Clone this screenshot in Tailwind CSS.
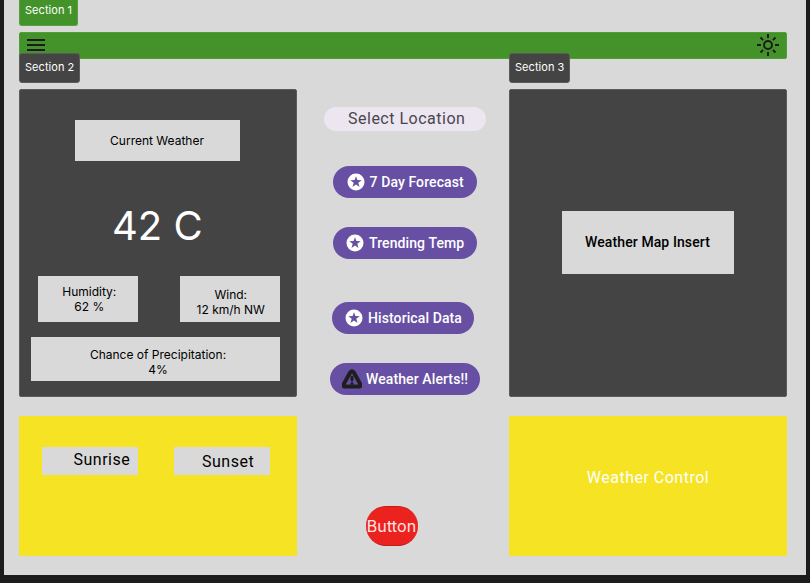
<!DOCTYPE html>
<html lang="en">
<head>
<meta charset="utf-8">
<title>Weather Dashboard</title>
<script src="https://cdn.jsdelivr.net/npm/@tailwindcss/browser@4"></script>
</head>
<body class="bg-[#1c1c1c] h-[583px] overflow-hidden px-1 font-['Inter',sans-serif] whitespace-nowrap">
<svg class="hidden">
  <symbol id="star" viewBox="0 0 20 20"><path fill="#fff" fill-rule="evenodd" d="M10 1.500a8.500 8.500 0 1 0 0 17a8.500 8.500 0 0 0 0-17ZM10 4.200L11.400 8.100L15.700 8.200L12.300 10.800L13.500 14.900L10 12.500L6.500 14.900L7.700 10.800L4.300 8.200L8.600 8.100Z"/></symbol>
</svg>
<main class="h-[575px] w-[802px] bg-[#d9d9d9] px-[15px]">
  <div class="h-[26px] w-[59px] rounded-b-[3px] border border-t-0 border-[#56a03f] bg-[#43932a] pl-[5px] pt-[3px] text-[11px] leading-[14px] tracking-[0.05px] text-white">Section 1</div>
  <header class="mt-[6px] flex h-[27px] w-[768px] items-center justify-between rounded-[2px] border border-[#4f9f38] bg-[#43932a] pb-[2px] pl-[7px] pr-[7px]">
    <svg class="h-[14px] w-[18px]" viewBox="0 0 18 14" fill="#1d1b20"><path d="M0 1h18v2H0zM0 6h18v2H0zM0 11h18v2H0z"/></svg>
    <svg class="h-[22px] w-[22px]" viewBox="0 0 22 22" fill="none" stroke="#1d1b20" stroke-width="2"><circle cx="11" cy="11" r="4"/><path d="M11 0v4M11 18v4M0 11h4M18 11h4M3.500 3.500l2.600 2.600M15.900 15.900l2.600 2.600M18.500 3.500l-2.600 2.600M6.100 15.900l-2.600 2.600"/></svg>
  </header>
  <div class="relative -mt-[6px] flex gap-[429px] text-[11px] leading-[14px] tracking-[0.05px] text-white">
    <div class="h-[30px] w-[61px] rounded-[3px] border border-[#5b5b5b] bg-[#444] pl-[5px] pt-[6px]">Section 2</div>
    <div class="h-[30px] w-[61px] rounded-[3px] border border-[#5b5b5b] bg-[#444] pl-[5px] pt-[6px]">Section 3</div>
  </div>
  <div class="mt-[6px] flex">
    <div class="w-[278px]">
      <section class="h-[308px] rounded-[2px] border border-[#5b5b5b] bg-[#444] pt-[30px] text-[12px] leading-[15px] text-black">
        <h2 class="ml-[55px] flex h-[41px] w-[165px] items-center justify-center bg-[#d9d9d9] pr-px">Current Weather</h2>
        <p class="mt-[40px] h-[50px] pl-[92px] text-[40px] leading-[50px] text-white">42 C</p>
        <div class="mt-[25px] flex gap-[42px] pl-[18px] text-center">
          <p class="h-[46px] w-[100px] bg-[#d9d9d9] pl-[2.5px] pt-[8px]">Humidity:<br>62 %</p>
          <p class="h-[46px] w-[100px] bg-[#d9d9d9] pl-[1.5px] pt-[11px]">Wind:<br>12 km/h NW</p>
        </div>
        <p class="ml-[11px] mt-[15px] h-[44px] w-[249px] bg-[#d9d9d9] pl-[5px] pt-[10px] text-center">Chance of Precipitation:<br>4%</p>
      </section>
      <section class="mt-[19px] flex h-[140px] gap-[36px] bg-[#f5e324] pl-[23px] pt-[31px] font-['Roboto',sans-serif] text-[16px] leading-[24px] tracking-[0.5px] text-black">
        <p class="h-[28px] w-[96px] bg-[#d9d9d9] pl-[31.5px] pt-px">Sunrise</p>
        <p class="h-[28px] w-[96px] bg-[#d9d9d9] pl-[28px] pt-[3px]">Sunset</p>
      </section>
    </div>
    <nav class="flex w-[212px] flex-col items-start pt-[18px] font-['Roboto',sans-serif] text-[14px] font-medium tracking-[0.1px] text-white">
      <button class="ml-[27px] h-[24px] w-[162px] rounded-full bg-[#ece6f0] pl-[24px] text-left text-[16px] font-normal leading-[24px] tracking-[0.5px] text-[#49454f]">Select Location</button>
      <button class="ml-[36px] mt-[35px] flex h-[32px] w-[144px] items-center gap-[4px] rounded-full bg-[#6750a4] pl-[12.5px]"><svg class="size-5"><use href="#star"/></svg>7 Day Forecast</button>
      <button class="ml-[36px] mt-[29px] flex h-[32px] w-[144px] items-center gap-[4px] rounded-full bg-[#6750a4] pl-[12px]"><svg class="size-5"><use href="#star"/></svg>Trending Temp</button>
      <button class="ml-[35px] mt-[43px] flex h-[32px] w-[142px] items-center gap-[4px] rounded-full bg-[#6750a4] pl-[12px]"><svg class="size-5"><use href="#star"/></svg>Historical Data</button>
      <button class="ml-[33px] mt-[29px] flex h-[32px] w-[150px] items-center gap-[4px] rounded-full bg-[#6750a4] pl-[12px]">
        <svg class="h-5 w-5" viewBox="0 0 20 20" fill="none" stroke="#1e1e1e" stroke-width="4" stroke-linecap="round" stroke-linejoin="round"><path d="M8.300 3.200L2 14.600V17.500H18V14.600L11.700 3.200Q10 1.200 8.300 3.200Z"/><path stroke-width="3" d="M10 8v3M10 14.500v.1"/></svg>Weather Alerts!!</button>
      <button class="ml-[69px] mt-[111px] flex h-[40px] w-[52px] items-center justify-center rounded-[20px] border-y border-[#c91a1a] bg-[#ec221f] pr-px font-['Inter',sans-serif] text-[16px] font-normal text-[#fee9e7]">Button</button>
    </nav>
    <div class="w-[278px] font-['Roboto',sans-serif]">
      <section class="h-[308px] rounded-[2px] border border-[#5b5b5b] bg-[#444] pl-[52px] pt-[121px]">
        <p class="h-[63px] w-[172px] bg-[#d9d9d9] pr-px text-center text-[14px] font-medium leading-[62px] tracking-[0.1px] text-black">Weather Map Insert</p>
      </section>
      <section class="mt-[19px] h-[140px] bg-[#f5e324] pt-[50px] text-center text-[16px] leading-[24px] tracking-[0.5px] text-white">Weather Control</section>
    </div>
  </div>
</main>
</body>
</html>
